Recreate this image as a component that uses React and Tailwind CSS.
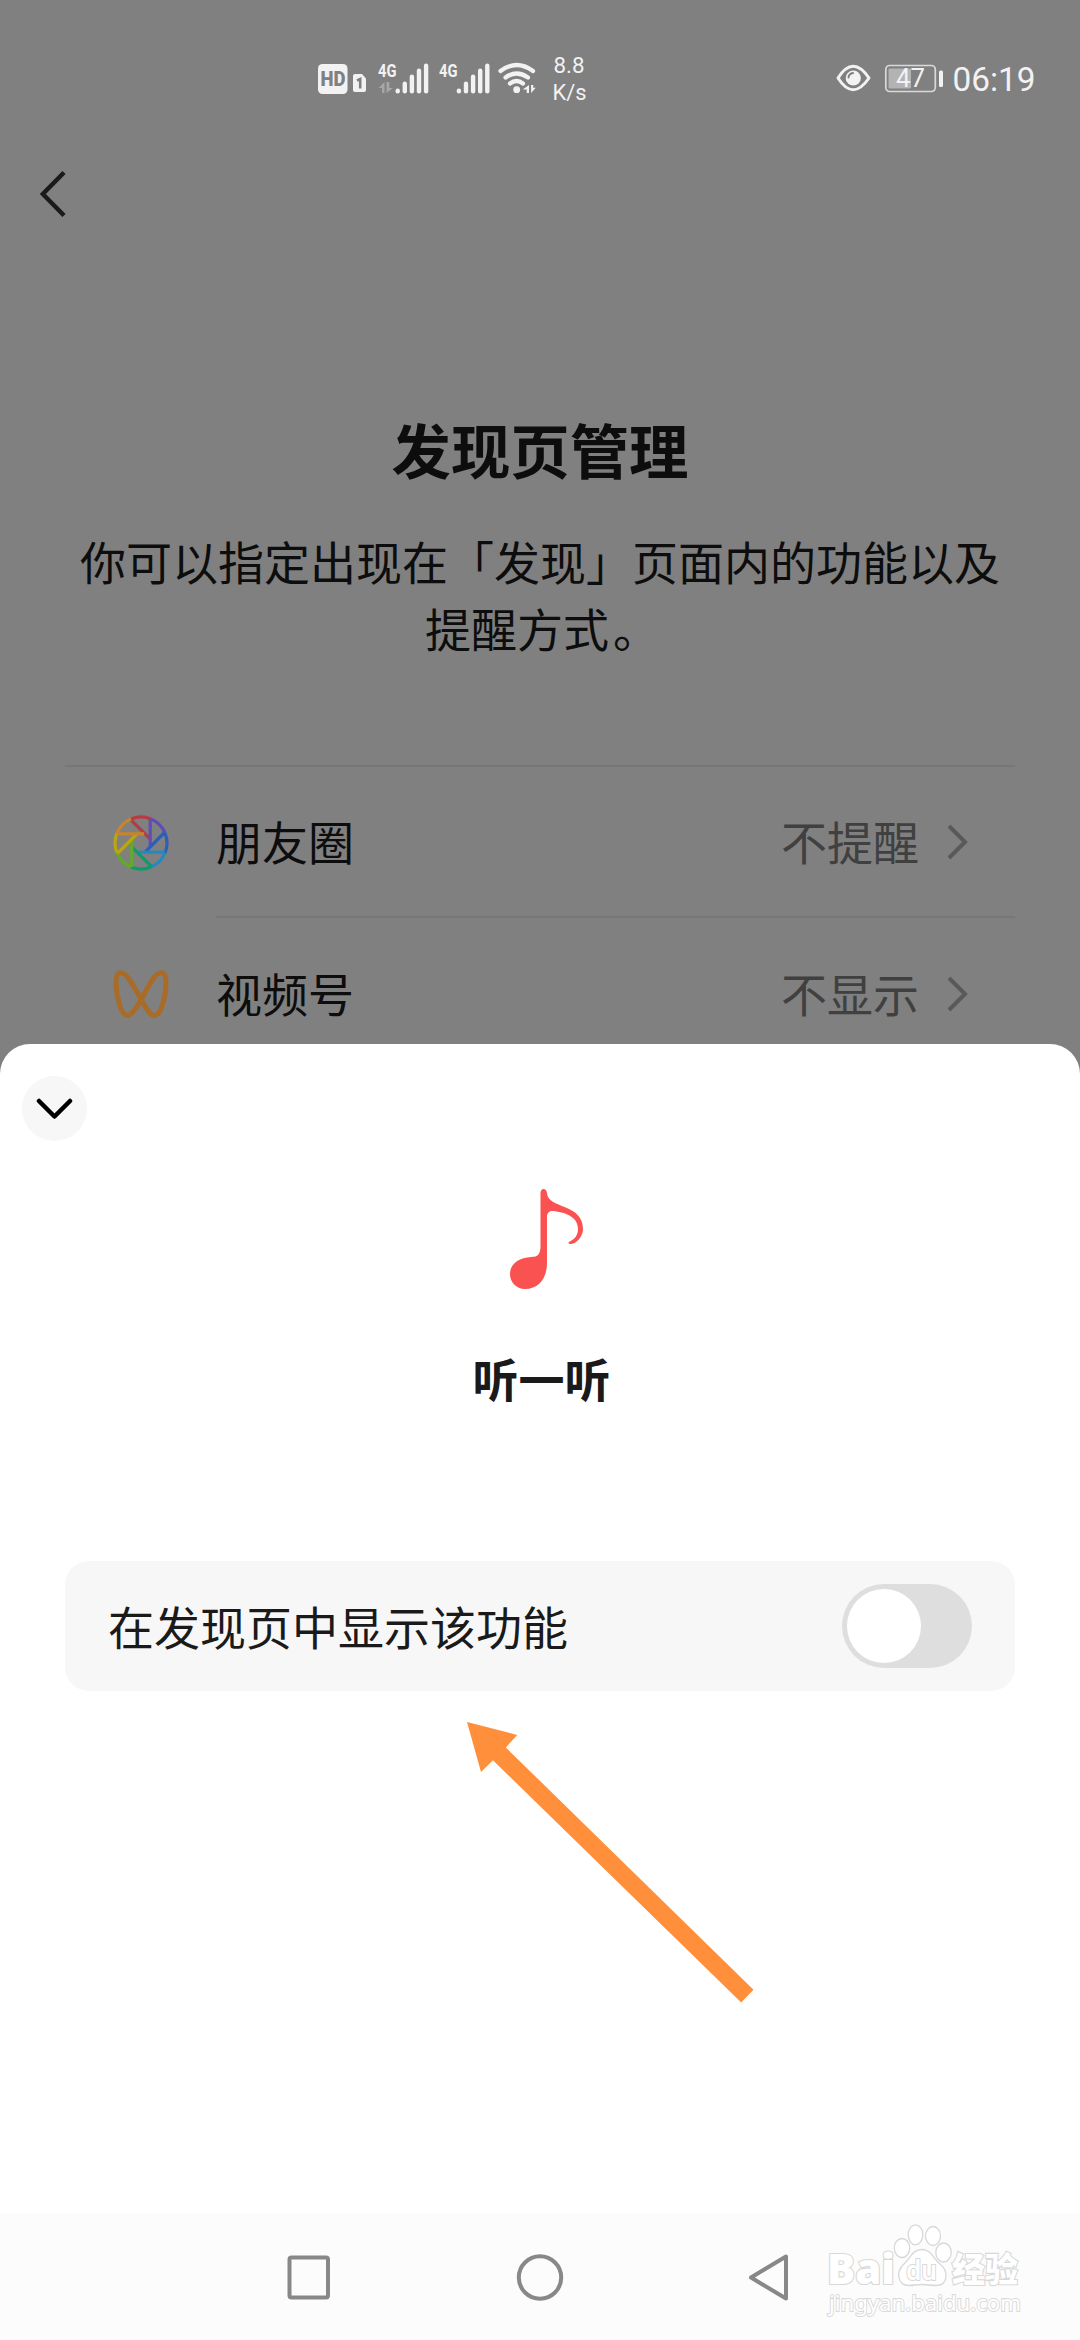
const cjk = "font-['Roboto','Noto_Sans_CJK_SC',sans-serif]";

function SignalBars({ x }) {
  const heights = [5, 12, 19, 25, 30];
  return heights.map((h, i) => (
    <rect key={i} x={x + i * 7.1} y={53.5 - h} width="4.4" height={h} rx="2.2" />
  ));
}

function StatusBar() {
  return (
    <header className="flex h-[142px] items-start text-[#f2f2f2]">
      <svg width="600" height="120" viewBox="0 0 600 120" fill="#f2f2f2" className="font-['Roboto',sans-serif]">
        <rect x="318" y="64" width="29.5" height="30" rx="4.5" />
        <text x="320.500" y="86" fontSize="19.500" fontWeight="900" fill="#808080" textLength="25" lengthAdjust="spacingAndGlyphs">HD</text>
        <path d="M355 74h7l4 4.5v11.500q0 2-2 2h-9q-2 0-2-2v-14q0-2 2-2z" />
        <path d="M357 80.500l3.200-1.500v9.500" fill="none" stroke="#808080" strokeWidth="2.600" />
        <text x="378" y="76.500" fontSize="19" fontWeight="700" textLength="18.500" lengthAdjust="spacingAndGlyphs">4G</text>
        <text x="439" y="76.500" fontSize="19" fontWeight="700" textLength="18.500" lengthAdjust="spacingAndGlyphs">4G</text>
        <path d="M384.500 82v11h-2.500v-5h-3.500zM386.500 82v11l6.500-5h-3.700v-6z" fill="#a6a6a6" />
        <g transform="translate(0 40)"><SignalBars x={395.5} /><SignalBars x={456.7} /></g>
        <g fill="none" stroke="#f2f2f2" strokeWidth="4.200" strokeLinecap="round">
          <path d="M500.500 71q16-12 32.500 0" />
          <path d="M505.500 77.500q11-8 22.500 0" />
          <path d="M510 83.500q6.500-5 13 0" />
        </g>
        <circle cx="516.700" cy="89.700" r="3.400" />
        <path d="M529 85v8h-2.300v-3.500h-4zM531 85l.2 8 4.500-5.200h-2.500v-2.800z" />
        <text x="553.500" y="73" fontSize="22.500" textLength="31" lengthAdjust="spacingAndGlyphs">8.8</text>
        <text x="552.500" y="100" fontSize="22.500" textLength="34" lengthAdjust="spacingAndGlyphs">K/s</text>
      </svg>
      <svg width="480" height="120" viewBox="600 0 480 120" fill="#f2f2f2" className="font-['Roboto',sans-serif]">
        <path d="M838 78q15-23.500 31 0q-16 23.500-31 0z" fill="none" stroke="#f2f2f2" strokeWidth="3" strokeLinejoin="round" />
        <circle cx="853.300" cy="78" r="7.600" />
        <path d="M848.500 77.500q.5-4 4.500-4.500" fill="none" stroke="#808080" strokeWidth="2" strokeLinecap="round" />
        <rect x="885.800" y="65.500" width="49.500" height="26" rx="4" fill="none" stroke="#d9d9d9" strokeWidth="1.700" />
        <rect x="888.500" y="68.500" width="22.500" height="20" rx="1" fill="#b3b3b3" />
        <rect x="939" y="70.500" width="4" height="16.500" rx="1.500" />
        <text x="896" y="87" fontSize="25" textLength="29" lengthAdjust="spacingAndGlyphs">47</text>
        <text x="952.500" y="91" fontSize="34" textLength="83" lengthAdjust="spacingAndGlyphs">06:19</text>
      </svg>
    </header>
  );
}

function MomentsIcon() {
  const blades = ["#b53c43", "#604cb4", "#2d5fb4", "#2588c0", "#109a68", "#5fac25", "#bba60f", "#c8842d"];
  return (
    <svg width="56" height="56" viewBox="-28 -28 56 56" fill="none" strokeWidth="3.200" className="block">
      {blades.map((c, i) => (
        <g key={c} stroke={c} transform={`rotate(${i * 45})`}>
          <path d="M-9.930 -23.970A25.900 25.900 0 0 1 9.930 -23.970" />
          <path d="M-10.500 -23.500L8.800 -4.300" />
        </g>
      ))}
    </svg>
  );
}

function ChannelsIcon() {
  return (
    <svg width="56" height="48" viewBox="0 0 56 48" fill="none" className="block">
      <path
        d="M28 30C23 38 19 45.500 14.500 45.500C8 45.500 3 26 3 12C3 5 5 2.800 8 2.800C14 2.800 20 15 28 29C33 38 37 45.500 41.500 45.500C48 45.500 53 26 53 12C53 5 51 2.800 48 2.800C42 2.800 36 15 28 30Z"
        stroke="#a96b28" strokeWidth="5" strokeLinejoin="round" />
    </svg>
  );
}

function Row({ icon, label, value, last }) {
  return (
    <div className="flex h-[151px]">
      <div className="flex w-[151px] items-center justify-center">{icon}</div>
      <div className={`flex flex-1 items-center justify-between pr-[46px] ${last ? "" : "border-b-2 border-[#777777]"}`}>
        <span className="pt-[5px] text-[46px] leading-[66px] text-[#0d0d0d]">{label}</span>
        <span className="flex items-center gap-7 text-[46px] leading-[66px] text-[#404040]">
          <span className="pt-[5px]">{value}</span>
          <svg width="22" height="36" viewBox="0 0 22 36" fill="none" stroke="#595959" strokeWidth="4" className="block">
            <path d="M2 2L18 18L2 34" />
          </svg>
        </span>
      </div>
    </div>
  );
}

function DiscoverPage() {
  return (
    <div className="h-[1044px] overflow-hidden">
      <StatusBar />
      <div className="h-[262px] pt-[28px] pl-10">
        <svg width="28" height="48" viewBox="0 0 28 48" fill="none" stroke="#1a1a1a" strokeWidth="4.500" className="block">
          <path d="M24 2.500L2.800 24L24 45.500" />
        </svg>
      </div>
      <h1 className="h-[119px] text-center text-[59.400px] leading-[100px] font-bold text-[#0d0d0d]">发现页管理</h1>
      <p className="mx-auto h-[242px] w-[924px] pt-2 text-center text-[46px] leading-[66.500px] text-[#0d0d0d]">
        你可以指定出现在「发现」页面内的功能以及提醒方式<span className="-mr-1 ml-1">。</span>
      </p>
      <div className="mx-[65px] border-t-2 border-[#777777]">
        <Row icon={<MomentsIcon />} label="朋友圈" value="不提醒" />
        <Row icon={<ChannelsIcon />} label="视频号" value="不显示" last />
      </div>
    </div>
  );
}

function MusicNote() {
  return (
    <svg width="74" height="102" viewBox="0 0 74 102" fill="#fa5151" className="block">
      <path d="M30.500 5C30.500 -0.500 36.500 -0.500 37 5C37.500 21 73 15 73 41C73 48 67 56 60 56C58.500 56 58 54.500 59 54C65 51 68 47 68 41C68 30 58 25 44 23C40 22.500 37 24 37 29V75C37 90 29 101 15 101C6 101 0 94 0 86C0 75 10 69.500 21 69C28 69 30.500 66 30.500 58Z" />
    </svg>
  );
}

function Watermark() {
  return (
    <svg width="208" height="110" viewBox="820 2220 208 110" fill="#ffffff" stroke="#d8d8d8" strokeWidth="1.300" className="block">
      <g strokeWidth="2.200" paintOrder="stroke">
        <text x="827" y="2284" fontSize="42" fontWeight="800" textLength="68" lengthAdjust="spacingAndGlyphs" className="font-['Open_Sans',sans-serif]">Bai</text>
        <text x="952" y="2282" fontSize="34" fontWeight="900" textLength="66" lengthAdjust="spacingAndGlyphs" className="font-['Noto_Sans_CJK_SC',sans-serif]">经验</text>
        <text x="829" y="2310.500" fontSize="22" strokeWidth="1.800" textLength="192" lengthAdjust="spacingAndGlyphs" className="font-['Noto_Sans',sans-serif]">jingyan.baidu.com</text>
      </g>
      <ellipse cx="902" cy="2248" rx="7.700" ry="9.500" />
      <ellipse cx="915.500" cy="2234.800" rx="7.300" ry="10" />
      <ellipse cx="933" cy="2236" rx="7.500" ry="9.500" />
      <ellipse cx="943.500" cy="2252.500" rx="7.700" ry="9.500" />
      <path d="M922 2249.500C932 2249.500 933 2259 940 2264C949 2271 948 2285.500 936 2285.500C931 2285.500 927 2284.500 922 2284.500C917 2284.500 914 2285.500 909 2285.500C897 2285.500 896 2271 904 2264C911 2258 912 2249.500 922 2249.500Z" />
      <text x="906" y="2280" fontSize="27" fontWeight="600" strokeWidth="2" paintOrder="stroke" textLength="31" lengthAdjust="spacingAndGlyphs" className="font-['Noto_Sans',sans-serif]">du</text>
    </svg>
  );
}

function NavBar() {
  return (
    <nav className="relative flex h-[126px] items-center justify-center gap-[184px] bg-[#fcfcfc] pt-[3px]">
      <svg width="48" height="50" viewBox="0 0 48 50" fill="none" stroke="#888888" strokeWidth="4" className="block">
        <rect x="5.500" y="3.500" width="38.500" height="40" rx="2" />
      </svg>
      <svg width="48" height="50" viewBox="0 0 48 50" fill="none" stroke="#888888" strokeWidth="4" className="block">
        <circle cx="24" cy="23.500" r="21.200" />
      </svg>
      <svg width="48" height="50" viewBox="0 0 48 50" fill="none" stroke="#888888" strokeWidth="4" strokeLinejoin="round" className="block">
        <path d="M3 23.500L38 2.500V44.500Z" />
      </svg>
      <div className="absolute top-[6px] left-[820px]"><Watermark /></div>
    </nav>
  );
}

export default function App() {
  return (
    <main className={`relative flex h-[2340px] w-[1080px] flex-col overflow-hidden bg-[#808080] ${cjk}`} lang="zh-CN">
      <DiscoverPage />
      <section className="flex h-[1170px] flex-col items-center rounded-t-[30px] bg-white">
        <div className="h-[144px] w-full pt-8 pl-[22px]">
          <button className="flex size-[65px] items-center justify-center rounded-full bg-[#f7f7f7]">
            <svg width="37" height="22" viewBox="0 0 37 22" fill="none" stroke="#000000" strokeWidth="4.500" strokeLinecap="round" strokeLinejoin="round" className="block">
              <path d="M3 3L18.500 18.500L34 3" />
            </svg>
          </button>
        </div>
        <div className="flex h-[160px] w-full pl-[510px]"><MusicNote /></div>
        <h2 className="h-[213px] pl-[3px] text-[46px] leading-[66px] font-bold text-[#1a1a1a]">听一听</h2>
        <div className="flex h-[130px] w-[950px] items-center justify-between rounded-[24px] bg-[#f7f7f7] pr-[43px] pl-[43px]">
          <span className="pt-[5px] text-[46px] leading-[66px] text-[#1a1a1a]">在发现页中显示该功能</span>
          <span className="flex h-[84px] w-[130px] items-center rounded-full bg-[#dedede] pl-[5px]">
            <span className="size-[74px] rounded-full bg-white" />
          </span>
        </div>
      </section>
      <NavBar />
      <svg width="300" height="300" viewBox="460 1710 300 300" className="absolute top-[1710px] left-[460px]">
        <path d="M467 1722L517.300 1735L505.800 1747.500L753.500 1989.700L741.200 2002.500L493 1760.300L481 1772Z" fill="#ff8f3a" />
      </svg>
    </main>
  );
}
